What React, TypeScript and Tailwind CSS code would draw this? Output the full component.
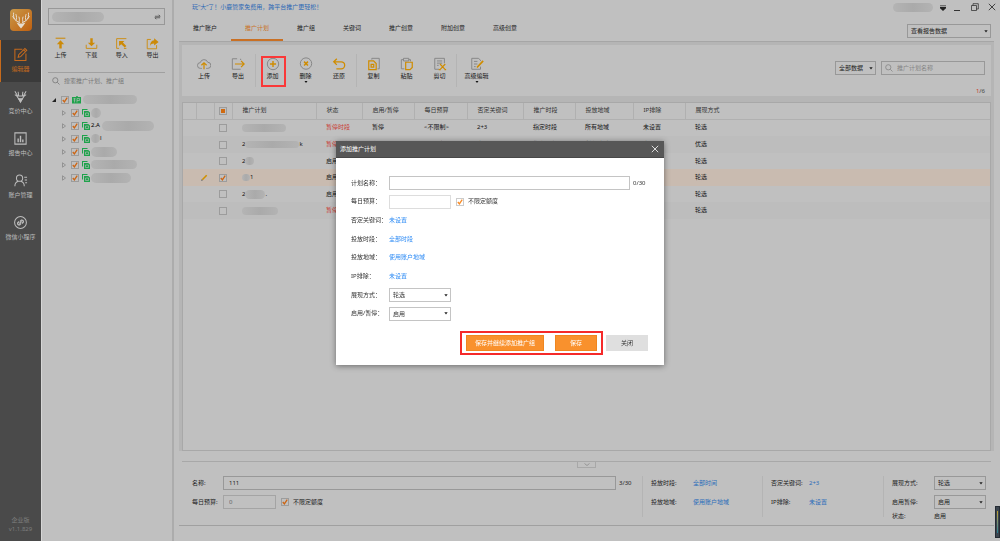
import type { ReactNode } from "react";

const tabs = ["推广账户", "推广计划", "推广组", "关键词", "推广创意", "附加创意", "高级创意"];

const columns = [
  "推广计划",
  "状态",
  "启用/暂停",
  "每日预算",
  "否定关键词",
  "推广时段",
  "投放地域",
  "IP排除",
  "展现方式",
];

const plans = [
  { mask: "w-[44px] h-[8px]", prefix: "", suffix: "", status: "暂停时段", enabled: "暂停", mode: "轮选" },
  { mask: "w-[54px] h-[7px]", prefix: "2", suffix: "k", status: "暂停时段", enabled: "启用", mode: "优选" },
  { mask: "w-[9px] h-[8px]", prefix: "2", suffix: "", status: "启用", enabled: "启用", mode: "轮选" },
  { mask: "w-[8px] h-[7px]", prefix: "", suffix: "1", status: "启用", enabled: "启用", mode: "轮选", selected: true },
  { mask: "w-[20px] h-[9px]", prefix: "2", suffix: ".", status: "启用", enabled: "启用", mode: "轮选" },
  { mask: "w-[36px] h-[8px]", prefix: "", suffix: "", status: "暂停时段", enabled: "启用", mode: "轮选" },
];

const units = [
  { mask: "w-[10px] h-[10px]", prefix: "", suffix: "" },
  { mask: "w-[52px] h-[10px] ml-[2px]", prefix: "2.A", suffix: "" },
  { mask: "w-[9px] h-[9px]", prefix: "", suffix: "l" },
  { mask: "w-[26px] h-[10px]", prefix: "", suffix: "" },
  { mask: "w-[46px] h-[9px]", prefix: "", suffix: "" },
  { mask: "w-[40px] h-[10px]", prefix: "", suffix: "" },
];

type SvgProps = { children: ReactNode; className?: string; box?: string };

function Svg({ children, className = "size-4", box = "0 0 16 16" }: SvgProps) {
  return (
    <svg
      aria-hidden="true"
      viewBox={box}
      fill="none"
      stroke="currentColor"
      strokeWidth="1.1"
      className={`shrink-0 ${className}`}
    >
      {children}
    </svg>
  );
}

function Mask({ className }: { className: string }) {
  return (
    <span
      className={`inline-block shrink-0 rounded-full bg-linear-to-r from-[#b4b4b4] via-[#aaaaaa] to-[#b3b3b3] ${className}`}
    ></span>
  );
}

function Check({ label, checked = false, bright = false, hideLabel = false, partial = false }: {
  label: string;
  checked?: boolean;
  bright?: boolean;
  hideLabel?: boolean;
  partial?: boolean;
}) {
  return (
    <label className="flex items-center gap-1">
      <span className="grid size-2 shrink-0">
        <input
          type="checkbox"
          defaultChecked={checked}
          aria-label={hideLabel ? label : undefined}
          className={`col-start-1 row-start-1 size-2 appearance-none border ${
            bright ? "border-[#cccccc] bg-white" : "border-[#9c9c9c] bg-[#c0c0c0]"
          }`}
        />
        {checked && (
          <svg
            aria-hidden="true"
            viewBox="0 0 8 8"
            className={`pointer-events-none col-start-1 row-start-1 size-2 ${
              bright ? "text-[#f98b25]" : "text-[#cc6514]"
            }`}
          >
            <path d="m1.800 4 1.600 1.900L6.200 1.700" fill="none" stroke="currentColor" strokeWidth="1.300" />
          </svg>
        )}
        {partial && (
          <span className="pointer-events-none col-start-1 row-start-1 m-[2px] bg-[#d06a10]"></span>
        )}
      </span>
      {!hideLabel && label}
    </label>
  );
}

function Dropdown({ id, label, value, options, className, bright = false }: {
  id: string;
  label?: string;
  value: string;
  options: string[];
  className: string;
  bright?: boolean;
}) {
  return (
    <span className={`grid h-[14px] shrink-0 items-center ${className}`}>
      <select
        id={id}
        aria-label={label}
        defaultValue={value}
        className={`col-start-1 row-start-1 h-full w-full appearance-none border pl-[3px] leading-[10px] ${
          bright ? "border-[#c4c4c4] bg-white" : "border-[#989898] bg-transparent"
        }`}
      >
        {options.map((option) => (
          <option key={option}>{option}</option>
        ))}
      </select>
      <svg
        aria-hidden="true"
        viewBox="0 0 4 3"
        className="pointer-events-none col-start-1 row-start-1 mr-[3px] h-[3px] w-1 justify-self-end"
      >
        <path d="M.3.300h3.400L2 2.600z" fill="#222" />
      </svg>
    </span>
  );
}

function NavItem({ label, active = false, children }: { label: string; active?: boolean; children: ReactNode }) {
  return (
    <a
      href="#"
      className={`flex h-[42px] flex-col items-center gap-[3px] pt-[7px] ${
        active ? "border-l border-[#c66a1c] bg-[#3a3a3a] pr-px text-[#c66a1c]" : "text-[#bdbdbd]"
      }`}
    >
      {children}
      <span className="whitespace-nowrap">{label}</span>
    </a>
  );
}

function Sidebar() {
  return (
    <nav className="flex w-[41px] shrink-0 flex-col bg-[#4a4a4a]">
      <div className="flex h-10 shrink-0 justify-center pt-2">
        <svg aria-hidden="true" viewBox="0 0 24 24" className="size-6">
          <defs>
            <linearGradient id="logo" x1="0" y1="0" x2="1" y2="1">
              <stop offset="0" stopColor="#c9994a" />
              <stop offset="1" stopColor="#c0600f" />
            </linearGradient>
          </defs>
          <rect x="1" y="1" width="22" height="22" rx="4" fill="url(#logo)" />
          <g fill="none" stroke="#e6ddd0" strokeWidth="1" strokeLinecap="round" strokeLinejoin="round">
            <path d="M10.500 14.500C6 13 3.800 10 4.600 5M5 10.500l-1.200-2M7 12.700C7.800 10.500 7.700 8.500 7 6.500M10 14c.6-1.800.6-3.400 0-5" />
            <path d="M13.500 14.500C18 13 20.200 10 19.400 5M19 10.500l1.200-2M17 12.700c-.8-2.200-.7-4.200 0-6.200M14 14c-.6-1.800-.6-3.400 0-5" />
          </g>
          <path d="m7.500 14.500 3 1h3l3-1-2 3-2.500 3-2.500-3z" fill="#e6ddd0" />
        </svg>
      </div>
      <NavItem label="编辑器" active>
        <Svg className="size-[15px]">
          <path d="M10 2.500H2v11.800h11.800V7" />
          <path d="m5.500 11 .6-2.800 6.600-6.700 2 2L8.200 10.300zM11.300 3l2 2" />
        </Svg>
      </NavItem>
      <NavItem label="竞价中心">
        <Svg className="size-[15px]">
          <path d="M2 2.500 5 7.500h6l3-5M2 6l2 1.500h2L5.500 3M14 6l-2 1.500h-2l.5-4.500M4 7.500l4 6 4-6" />
          <path d="m6 10.500 2 3.500 2-3.500z" fill="currentColor" />
        </Svg>
      </NavItem>
      <NavItem label="报告中心">
        <Svg className="size-[15px]">
          <path d="M2 2h12v12H2z" />
          <path d="M5.500 8v4M8 5v7M10.500 9v3" strokeWidth="1.500" />
        </Svg>
      </NavItem>
      <NavItem label="账户管理">
        <Svg className="size-[15px]">
          <circle cx="7" cy="5.500" r="3.300" />
          <path d="M2 14c0-3 1.500-4.500 3.500-5.200M8.500 8.800c2 .7 3.500 2.200 3.500 5.200M12 4.500h3M12.500 7.500H15M13 10.500h2" />
        </Svg>
      </NavItem>
      <NavItem label="微信小程序">
        <Svg className="size-[15px]">
          <circle cx="8" cy="8" r="6.300" />
          <path
            d="M7.500 7 9 5.500a1.600 1.600 0 0 1 2 2L9.500 9M8.500 9 7 10.500a1.600 1.600 0 0 1-2-2L6.500 7M6.800 9.200l2.400-2.400"
            strokeWidth="1.400"
          />
        </Svg>
      </NavItem>
      <div className="mt-auto pb-[7px] text-center leading-[9px] text-[#7d7d7d]">
        <p>企业版</p>
        <p>v1.1.829</p>
      </div>
    </nav>
  );
}

function QuickAction({ label, children }: { label: string; children: ReactNode }) {
  return (
    <button type="button" className="flex w-[25px] flex-col items-center gap-[1px]">
      <Svg className="size-[13px] text-[#cc8a08]">{children}</Svg>
      {label}
    </button>
  );
}

function AccountPanel() {
  return (
    <aside className="w-[133px] shrink-0 border-r-2 border-l border-[#acacac] border-l-[#d6d6d6] pt-2 pr-[7px] pl-[6px]">
      <div className="flex h-[17px] items-center justify-between border border-[#989898] px-[3px]">
        <Mask className="h-[10px] w-[52px]" />
        <Svg className="h-[6px] w-[7px]" box="0 0 8 8">
          <path d="M.5 3h7L5.500 1M7.500 5h-7l2 2" stroke="#333" strokeWidth=".9" />
        </Svg>
      </div>
      <div className="mt-[12px] flex justify-between text-[#1f1f1f]">
        <QuickAction label="上传">
          <path d="M2 1.500h12" strokeWidth="1.300" />
          <path d="M8 4 3.500 9h3v5h3V9h3z" fill="currentColor" stroke="none" />
        </QuickAction>
        <QuickAction label="下载">
          <path d="M1.500 9.500v4.500h13V9.500" />
          <path d="M8 11.500 3.500 7h3V1.500h3V7h3z" fill="currentColor" stroke="none" />
        </QuickAction>
        <QuickAction label="导入">
          <path d="M14 2H2v12M14 14h-3M5 14H2" />
          <path d="M5 5h6.500L9.700 6.800 14 11l-2 2-4.300-4.200L5 11z" fill="currentColor" stroke="none" />
        </QuickAction>
        <QuickAction label="导出">
          <path d="M6 3H1.500v11.500H13V10" />
          <path d="M10 1.500 15.500 6 10 10.500V8C7.500 8 6 9 5 11c0-4 1.500-6.500 5-7z" fill="currentColor" stroke="none" />
        </QuickAction>
      </div>
      <div className="mt-[12px] flex items-center gap-1 border-t border-[#a0a0a0] px-1 pt-[3px] text-[#777777]">
        <Svg className="size-2" box="0 0 8 8">
          <circle cx="3.300" cy="3.300" r="2.600" strokeWidth=".8" />
          <path d="m5.300 5.300 2.200 2.200" strokeWidth=".8" />
        </Svg>
        <input
          aria-label="搜索"
          placeholder="搜索推广计划、推广组"
          className="h-[10px] min-w-0 flex-1 placeholder:text-[#777777]"
        />
      </div>
      <ul className="mt-[7px]">
        <li className="flex h-[13px] items-center gap-[5px] pl-1">
          <Svg className="size-1" box="0 0 4 4">
            <path d="M4 0v4H0z" fill="#222" stroke="none" />
          </Svg>
          <Check label="账户" checked hideLabel />
          <Svg className="-ml-[2px] h-2 w-[9px] text-[#1fa24b]" box="0 0 9 8">
            <path d="M0 1h4l.5-1h1L6 1h3v6.500H0z" fill="currentColor" stroke="none" />
            <path d="M1.500 2.500h2M1.500 4h2M2.500 2.500v4M5 6.500v-4h2.500v2H5" stroke="#c0c0c0" strokeWidth=".6" />
          </Svg>
          <Mask className="-ml-[3px] h-[9px] w-[54px]" />
        </li>
        {units.map((unit, index) => (
          <li key={index} className="flex h-[13px] items-center gap-[5px] pl-[14px]">
            <Svg className="h-[6px] w-1 text-[#888888]" box="0 0 4 6">
              <path d="M.5.8 3.500 3 .5 5.200z" strokeWidth=".8" />
            </Svg>
            <Check label={`推广计划${index + 1}`} checked hideLabel />
            <Svg className="-ml-[2px] size-2 text-[#1fa24b]" box="0 0 8 8">
              <path d="M.5 5.500v-5h5" />
              <path d="M2 2h4.200L8 3.500V8H2z" fill="currentColor" stroke="none" />
              <path d="M3.500 4h3v2.500h-3z" stroke="#c0c0c0" strokeWidth=".6" />
            </Svg>
            <span className="-ml-1 flex items-center text-black">
              {unit.prefix}
              <Mask className={unit.mask} />
              {unit.suffix}
            </span>
          </li>
        ))}
      </ul>
    </aside>
  );
}

function Tool({ label, menu = false, className = "w-[33px]", children }: {
  label: string;
  menu?: boolean;
  className?: string;
  children: ReactNode;
}) {
  return (
    <button type="button" className={`flex flex-col items-center justify-start pt-[3px] ${className}`}>
      <Svg className="size-[14px] text-[#858585]">{children}</Svg>
      <span className="mt-px whitespace-nowrap">{label}</span>
      {menu && (
        <svg aria-hidden="true" viewBox="0 0 4 2" className="h-[2px] w-1">
          <path d="M.5 0h3L2 2z" fill="#111" />
        </svg>
      )}
    </button>
  );
}

function Divider() {
  return <span className="w-px bg-[#b4b4b4]"></span>;
}

function Header() {
  return (
    <header className="flex h-[41px] shrink-0 justify-between pr-[2px] pl-[5px]">
      <div className="flex flex-col">
        <a href="#" className="pt-[2px] pl-[13px] leading-[10px] text-[#2a67b5]">
          玩“大”了！小鹿管家免费用，跨平台推广更轻松！
        </a>
        <div role="tablist" className="mt-auto flex h-[26px]">
          {tabs.map((tab) => (
            <button
              key={tab}
              type="button"
              role="tab"
              aria-selected={tab === "推广计划"}
              className="border-b-2 border-transparent px-[14px] pt-[2px] aria-selected:border-[#c97024] aria-selected:text-[#c97024]"
            >
              {tab}
            </button>
          ))}
        </div>
      </div>
      <div className="flex flex-col items-end gap-[10px]">
        <div className="flex h-[14px] items-center gap-[7px] text-[#222222]">
          <Mask className="h-[9px] w-[40px]" />
          <button type="button" aria-label="菜单">
            <Svg className="h-[7px] w-[6px]" box="0 0 7 8">
              <path d="M0 2h7" strokeWidth=".8" />
              <path d="M0 3.500h7v1.500L3.500 8 0 5z" fill="currentColor" stroke="none" />
            </Svg>
          </button>
          <button type="button" aria-label="最小化">
            <Svg className="h-2 w-[9px]" box="0 0 9 8">
              <path d="M1 7.500h6" strokeWidth=".9" />
            </Svg>
          </button>
          <button type="button" aria-label="还原">
            <Svg className="ml-[2px] size-2" box="0 0 8 8">
              <path d="M.5 2.500h5v5h-5zM2 2.500V.7h5.300v5.300H5.500" strokeWidth=".7" />
            </Svg>
          </button>
          <button type="button" aria-label="关闭窗口">
            <Svg className="mx-[2px] size-2" box="0 0 8 8">
              <path d="m.8.8 6.400 6.400M7.200.8.8 7.200" strokeWidth=".8" />
            </Svg>
          </button>
        </div>
        <div className="pr-[7px]">
          <Dropdown id="report" label="报告" value="查看报告数据" options={["查看报告数据"]} className="w-[84px]" />
        </div>
      </div>
    </header>
  );
}

function Toolbar() {
  return (
    <div className="flex h-[51px] shrink-0 justify-between bg-[#c0c0c0] pr-[6px] pl-[5px]">
      <div className="mt-[9px] flex h-[33px] text-[#171717]">
        <Tool label="上传" className="w-[34px]">
          <path d="M5.500 13H4a3.300 3.300 0 0 1-.3-6.600 4.500 4.500 0 0 1 8.600-.4 3.500 3.500 0 0 1 0 7h-1.800" />
          <path d="M8 14V7M5 9.500 8 6.700l3 2.800" stroke="#cf8c00" strokeWidth="1.400" />
        </Tool>
        <Tool label="导出" className="w-[34px]">
          <path d="M7 2H1.500v12H11M11 2v1.500" />
          <path d="M4.500 8H15M11.500 4.500 15 8l-3.500 3.500" stroke="#cf8c00" strokeWidth="1.400" />
        </Tool>
        <Divider />
        <Tool label="添加">
          <circle cx="8" cy="8" r="6.500" />
          <path d="M8 4.500v7M4.500 8h7" stroke="#cf8c00" strokeWidth="1.600" />
        </Tool>
        <Tool label="删除" menu>
          <circle cx="8" cy="7.500" r="6.500" />
          <path d="m5.800 5.300 4.400 4.400M10.200 5.300 5.800 9.700" stroke="#cf8c00" strokeWidth="1.700" />
        </Tool>
        <Tool label="还原" className="w-[34px]">
          <path d="M5.500 2 2 5.500 5.500 9M2 5.500h8.500a3.800 3.800 0 0 1 0 8H5" stroke="#cf8c00" strokeWidth="1.500" />
        </Tool>
        <Divider />
        <Tool label="复制">
          <path d="M5.500 3V1.500H14v12h-2" />
          <path d="M2 4.500h5.500l3 3v7H2zM4.700 8.500h3v3h-3z" stroke="#cf8c00" strokeWidth="1.400" />
        </Tool>
        <Tool label="粘贴">
          <path d="M5 13.500H1.500V3H4M10 3h2v2M4 1.500h6v3H4z" />
          <path d="M6.500 6H14v6l-2.500 2.500h-5z" stroke="#cf8c00" strokeWidth="1.400" />
        </Tool>
        <Tool label="剪切">
          <path d="M13 7V1.500H2V14h5M4.500 4.500h6M4.500 7h6M4.500 9.500h2" />
          <path d="m8 8 6 6.500M14 8l-6 6.500M6.500 14.500H9M13 14.500h2" stroke="#cf8c00" strokeWidth="1.300" />
        </Tool>
        <Divider />
        <Tool label="高级编辑" menu className="w-[39px]">
          <path d="M12 4.500V3.500L9.500 1.500H2v12.500h10V11M4.500 5h4M4.500 8h4M4.500 11h2" />
          <path d="m8 12 7-7.500" stroke="#cf8c00" strokeWidth="2" />
        </Tool>
      </div>
      <div className="flex flex-col items-end justify-between pt-4">
        <div className="flex gap-[5px]">
          <Dropdown id="scope" label="数据范围" value="全部数据" options={["全部数据"]} className="w-[41px]" />
          <div className="flex h-[14px] w-[104px] items-center gap-1 border border-[#989898] px-[3px] text-[#858585]">
            <Svg className="size-2" box="0 0 8 8">
              <circle cx="3.300" cy="3.300" r="2.600" strokeWidth=".8" />
              <path d="m5.300 5.300 2.200 2.200" strokeWidth=".8" />
            </Svg>
            <input
              aria-label="搜索推广计划"
              placeholder="推广计划名称"
              className="h-[10px] min-w-0 flex-1 placeholder:text-[#858585]"
            />
          </div>
        </div>
        <p className="leading-[9px] text-[#444444]">
          <span className="text-[#cc3a1e]">1</span>/6
        </p>
      </div>
    </div>
  );
}

function PlanTable() {
  return (
    <div className="mt-[6px] flex-1 border border-[#a8a8a8] bg-[#c0c0c0]">
      <table className="h-[116px] w-full table-fixed border-collapse text-left text-[#141414]">
        <colgroup>
          <col className="w-[13px]" />
          <col className="w-[18px]" />
          <col className="w-[18px]" />
          <col className="w-[84px]" />
          <col className="w-[46px]" />
          <col className="w-[52px]" />
          <col className="w-[53px]" />
          <col className="w-[56px]" />
          <col className="w-[52px]" />
          <col className="w-[58px]" />
          <col className="w-[52px]" />
          <col />
        </colgroup>
        <thead>
          <tr className="h-4 border-b border-[#b0b0b0] text-[#333333]">
            <th className="border-r border-[#b0b0b0] p-0"></th>
            <th className="border-r border-[#b0b0b0] p-0"></th>
            <th className="border-r border-[#b0b0b0] p-0 pl-1">
              <Check label="全选" hideLabel partial />
            </th>
            {columns.map((column) => (
              <th
                key={column}
                className="border-r border-[#b0b0b0] p-0 pl-[10px] font-normal whitespace-nowrap last:border-r-0"
              >
                {column}
              </th>
            ))}
          </tr>
        </thead>
        <tbody>
          {plans.map((plan, index) => (
            <tr key={index} className={plan.selected ? "bg-[#c9bbb0]" : "even:bg-[#bdbdbd]"}>
              <td className="p-0"></td>
              <td className="p-0 pl-[5px]">
                {plan.selected && (
                  <Svg className="size-[7px]" box="0 0 7 7">
                    <path d="m1.300 5.700 4.400-4.400" stroke="#d09000" strokeWidth="1.600" />
                    <path d="m0 7 .5-2L2 6.500z" fill="#777" stroke="none" />
                  </Svg>
                )}
              </td>
              <td className="p-0 pl-[5px]">
                <Check label={`选择计划${index + 1}`} checked={plan.selected} hideLabel />
              </td>
              <td className="p-0 pl-[10px]">
                <span className="flex items-center">
                  {plan.prefix}
                  <Mask className={plan.mask} />
                  {plan.suffix}
                </span>
              </td>
              <td className={`p-0 pl-[10px] whitespace-nowrap ${plan.status === "启用" ? "" : "text-[#c93c35]"}`}>
                {plan.status}
              </td>
              <td className="p-0 pl-[10px]">{plan.enabled}</td>
              <td className="p-0 pl-[10px] whitespace-nowrap">&lt;不限制&gt;</td>
              <td className="p-0 pl-[10px]">{index === 0 ? "2+3" : "未设置"}</td>
              <td className="p-0 pl-[10px]">指定时段</td>
              <td className="p-0 pl-[10px]">所有地域</td>
              <td className="p-0 pl-[10px]">未设置</td>
              <td className="p-0 pl-[10px]">{plan.mode}</td>
            </tr>
          ))}
        </tbody>
      </table>
    </div>
  );
}

function DetailPanel() {
  return (
    <section className="mr-[6px] ml-[5px] h-[75px] shrink-0 border-b border-[#a0a0a0] pt-[10px] pr-[3px] pl-[3px]">
      <div className="flex h-[15px] justify-center border-t border-[#a8a8a8]">
        <button
          type="button"
          aria-label="收起"
          className="flex h-[6px] w-[19px] items-center justify-center border border-t-0 border-[#a8a8a8]"
        >
          <Svg className="h-[3px] w-[6px] text-[#8a8a8a]" box="0 0 6 3">
            <path d="m.5.5 2.500 2 2.500-2" strokeWidth=".8" />
          </Svg>
        </button>
      </div>
      <div className="flex h-[45px] pr-[5px] pl-[10px]">
        <div className="flex min-w-0 flex-1 flex-col gap-[5px]">
          <div className="flex h-[14px] items-center">
            <label htmlFor="detail-name" className="w-[31px] shrink-0">名称:</label>
            <input
              id="detail-name"
              defaultValue="111"
              className="h-[14px] min-w-0 flex-1 border border-[#989898] px-[5px]"
            />
            <span className="w-[26px] pl-[3px]">3/30</span>
          </div>
          <div className="flex h-[14px] items-center">
            <label htmlFor="detail-budget" className="w-[31px] shrink-0">每日预算:</label>
            <input
              id="detail-budget"
              defaultValue="0"
              className="mr-[5px] h-[14px] w-[53px] border border-[#a4a4a4] px-[5px] text-[#666666]"
            />
            <Check label="不限定额度" checked />
          </div>
        </div>
        <dl className="grid h-[41px] w-[120px] shrink-0 grid-cols-[42px_1fr] content-start items-center gap-y-[5px] border-l border-[#b4b4b4] pl-2 leading-[14px]">
          <dt>投放时段:</dt>
          <dd><a href="#" className="text-[#2a6cba]">全部时间</a></dd>
          <dt>投放地域:</dt>
          <dd><a href="#" className="text-[#2a6cba]">使用账户地域</a></dd>
        </dl>
        <dl className="grid h-[41px] w-[121px] shrink-0 grid-cols-[38px_1fr] content-start items-center gap-y-[5px] border-l border-[#b4b4b4] pl-2 leading-[14px]">
          <dt>否定关键词:</dt>
          <dd><a href="#" className="text-[#2a6cba]">2+3</a></dd>
          <dt>IP排除:</dt>
          <dd><a href="#" className="text-[#2a6cba]">未设置</a></dd>
        </dl>
        <div className="grid h-[41px] w-[103px] shrink-0 grid-cols-[42px_52px] content-start items-center gap-y-[5px] border-l border-[#b4b4b4] pl-2">
          <label htmlFor="detail-mode">展现方式:</label>
          <Dropdown id="detail-mode" value="轮选" options={["轮选", "优选"]} className="w-[52px]" />
          <label htmlFor="detail-state">启用暂停:</label>
          <Dropdown id="detail-state" value="启用" options={["启用", "暂停"]} className="w-[52px]" />
          <span className="-mt-[2px]">状态:</span>
          <span className="-mt-[2px]">启用</span>
        </div>
      </div>
    </section>
  );
}

function LinkRow({ label, value }: { label: string; value: string }) {
  return (
    <div className="flex h-[14px] items-center">
      <span className="w-[38px] shrink-0 whitespace-nowrap">{label}</span>
      <a href="#" className="text-[#2f8cf5]">{value}</a>
    </div>
  );
}

function AddPlanDialog() {
  return (
    <div className="fixed inset-0 flex items-start justify-center pt-[141px]">
      <div
        role="dialog"
        aria-labelledby="dialog-title"
        className="w-[328px] bg-white text-[#333333] shadow-[0_1px_6px_rgba(0,0,0,0.45)]"
      >
        <div className="flex h-[17px] items-center justify-between border-b border-[#484848] bg-[#575757] pr-[5px] pl-1 text-white">
          <h2 id="dialog-title">添加推广计划</h2>
          <button type="button" aria-label="关闭对话框">
            <Svg className="size-2" box="0 0 8 8">
              <path d="m.8.8 6.400 6.400M7.200.8.8 7.200" strokeWidth=".8" />
            </Svg>
          </button>
        </div>
        <form className="pt-[18px] pr-4 pb-[10px] pl-[15px]">
          <div className="flex h-[145px] flex-col justify-between">
            <div className="flex h-[14px] items-center">
              <label htmlFor="name" className="w-[38px] shrink-0">计划名称：</label>
              <input id="name" className="h-[14px] min-w-0 flex-1 border border-[#c4c4c4] px-1" />
              <span className="w-[18px] pl-[3px]">0/30</span>
            </div>
            <div className="flex h-[14px] items-center">
              <label htmlFor="budget" className="w-[38px] shrink-0">每日预算：</label>
              <input id="budget" className="mr-[5px] h-[14px] w-[62px] border border-[#dddddd] px-1" />
              <Check label="不限定额度" checked bright />
            </div>
            <LinkRow label="否定关键词：" value="未设置" />
            <LinkRow label="投放时段：" value="全部时段" />
            <LinkRow label="投放地域：" value="使用账户地域" />
            <LinkRow label="IP排除：" value="未设置" />
            <div className="flex h-[14px] items-center">
              <label htmlFor="mode" className="w-[38px] shrink-0">展现方式：</label>
              <Dropdown id="mode" value="轮选" options={["轮选", "优选"]} className="w-[62px]" bright />
            </div>
            <div className="flex h-[14px] items-center">
              <label htmlFor="state" className="w-[38px] shrink-0">启用/暂停：</label>
              <Dropdown id="state" value="启用" options={["启用", "暂停"]} className="w-[62px]" bright />
            </div>
          </div>
          <div className="mt-[10px] flex items-center justify-end gap-[3px]">
            <div className="flex gap-[11px] border-2 border-[#f52a2a] px-[4px] py-[2px]">
              <button type="button" className="h-4 w-[78px] border border-[#ef8620] bg-[#f9912d] text-white">
                保存并继续添加推广组
              </button>
              <button type="submit" className="h-4 w-[42px] border border-[#ef8620] bg-[#f9912d] text-white">
                保存
              </button>
            </div>
            <button type="button" className="h-4 w-[42px] bg-[#dfdfdf]">关闭</button>
          </div>
        </form>
      </div>
    </div>
  );
}

export default function App() {
  return (
    <div className="flex min-h-screen bg-[#c0c0c0] font-['Noto_Sans','Noto_Sans_CJK_SC',sans-serif] text-[6px] leading-[9px] text-[#222222]">
      <Sidebar />
      <AccountPanel />
      <main className="flex min-w-0 flex-1 flex-col">
        <Header />
        <div className="mr-[6px] ml-[5px] flex flex-1 flex-col border-t border-[#a6a6a6] bg-[#b5b5b5] pt-[3px] pr-[3px] pl-[3px]">
          <Toolbar />
          <PlanTable />
        </div>
        <DetailPanel />
        <div className="h-[15px] shrink-0"></div>
      </main>
      <div className="absolute top-[56px] left-[261px] h-[31px] w-[25px] border-2 border-[#fa3838]"></div>
      <div className="absolute right-0 bottom-[3px] flex h-8 w-[5px] border border-[#252c34] bg-[#3c454f]">
        <span className="my-1 ml-px w-px bg-linear-to-b from-[#c0a020] to-[#1d7f95]"></span>
      </div>
      <AddPlanDialog />
    </div>
  );
}
